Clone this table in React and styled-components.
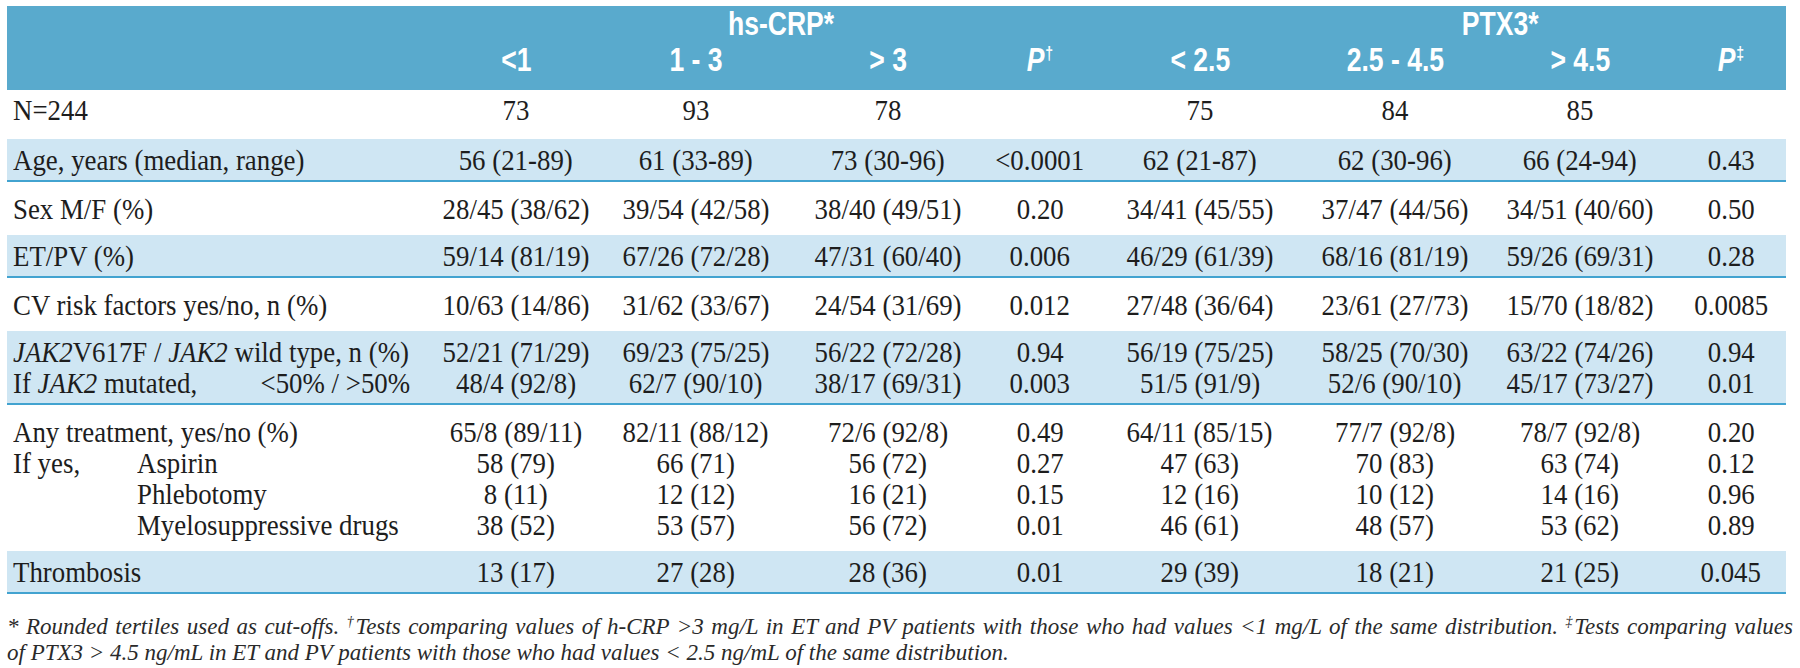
import styled, { createGlobalStyle } from "styled-components";

const GlobalStyle = createGlobalStyle`
  html, body { margin: 0; padding: 0; background: #ffffff; }
  body { width: 1800px; height: 668px; overflow: hidden; }
`;

const Page = styled.div`
  padding: 6px 14px 0 7px;
  color: #1d1d1d;
`;

const Table = styled.table`
  width: 1779px;
  border-collapse: collapse;
  table-layout: fixed;
`;

const Col = styled.col`
  width: ${(p) => p.$w}px;
`;

const Head = styled.thead`
  background: #59aacd;
  color: #ffffff;
  font-family: "Liberation Sans", Arial, sans-serif;
`;

const HeadCell = styled.th`
  padding: ${(p) => p.$padTop || 0}px ${(p) => p.$padRight || 0}px 0 ${(p) => p.$padLeft || 0}px;
  height: ${(p) => p.$h}px;
  font-size: 34px;
  line-height: 34px;
  font-weight: bold;
  text-align: center;
  vertical-align: ${(p) => p.$valign || "middle"};
  white-space: nowrap;
`;

const HeadTxt = styled.span`
  display: inline-block;
  transform: scaleX(0.78);
  transform-origin: center;
`;

const HeadP = styled.span`
  font-style: italic;
`;

const HeadSup = styled.sup`
  font-size: 18px;
  font-style: normal;
  vertical-align: 12px;
  line-height: 0;
  margin-left: 1px;
`;

const Group = styled.tbody`
  background: ${(p) => (p.$band ? "#cfe6f3" : "transparent")};
  border-bottom: ${(p) => (p.$band ? "2px solid #42a3d0" : "none")};
`;

const Cell = styled.td`
  padding: ${(p) => p.$top}px 0 ${(p) => p.$bottom}px ${(p) => (p.$label ? 6 : 0)}px;
  height: 31px;
  line-height: 31px;
  font-family: "Liberation Serif", "Times New Roman", serif;
  font-size: 30px;
  text-align: ${(p) => (p.$label ? "left" : "center")};
  white-space: nowrap;
`;

const Txt = styled.span`
  display: inline-block;
  transform: scaleX(0.895);
  transform-origin: ${(p) => p.$origin || "center"};
`;

const LabelLine = styled.div`
  display: flex;
  align-items: baseline;
  justify-content: ${(p) => (p.$split ? "space-between" : "flex-start")};
  padding-right: ${(p) => (p.$split ? 20 : 0)}px;
`;

const Lead = styled.span`
  width: 124px;
  flex: none;
`;

const Notes = styled.div`
  margin-top: 20px;
  width: 1786px;
  font-family: "Liberation Serif", "Times New Roman", serif;
  font-style: italic;
  font-size: 23px;
  line-height: 26px;
  color: #2a2a2a;
`;

const NoteLine = styled.div`
  white-space: nowrap;
  text-align: ${(p) => (p.$justify ? "justify" : "left")};
  text-align-last: ${(p) => (p.$justify ? "justify" : "auto")};
`;

const NoteSup = styled.sup`
  font-size: 14px;
  line-height: 0;
  vertical-align: 8px;
`;

const widths = [423, 172, 188, 196, 108, 212, 178, 192, 110];

const J = ({ children }) => <i>{children}</i>;

// pad: [top, bottom] around the group
const groups = [
  {
    band: false,
    pad: [4, 14],
    rows: [{ label: "N=244", values: ["73", "93", "78", "", "75", "84", "85", ""] }],
  },
  {
    band: true,
    pad: [5, 5],
    rows: [
      {
        label: "Age, years (median, range)",
        values: ["56 (21-89)", "61 (33-89)", "73 (30-96)", "<0.0001", "62 (21-87)", "62 (30-96)", "66 (24-94)", "0.43"],
      },
    ],
  },
  {
    band: false,
    pad: [11, 11],
    rows: [
      {
        label: "Sex M/F (%)",
        values: ["28/45 (38/62)", "39/54 (42/58)", "38/40 (49/51)", "0.20", "34/41 (45/55)", "37/47 (44/56)", "34/51 (40/60)", "0.50"],
      },
    ],
  },
  {
    band: true,
    pad: [5, 5],
    rows: [
      {
        label: "ET/PV (%)",
        values: ["59/14 (81/19)", "67/26 (72/28)", "47/31 (60/40)", "0.006", "46/29 (61/39)", "68/16 (81/19)", "59/26 (69/31)", "0.28"],
      },
    ],
  },
  {
    band: false,
    pad: [11, 11],
    rows: [
      {
        label: "CV risk factors yes/no, n (%)",
        values: ["10/63 (14/86)", "31/62 (33/67)", "24/54 (31/69)", "0.012", "27/48 (36/64)", "23/61 (27/73)", "15/70 (18/82)", "0.0085"],
      },
    ],
  },
  {
    band: true,
    pad: [5, 5],
    rows: [
      {
        label: (
          <>
            <J>JAK2</J>V617F / <J>JAK2</J> wild type, n (%)
          </>
        ),
        values: ["52/21 (71/29)", "69/23 (75/25)", "56/22 (72/28)", "0.94", "56/19 (75/25)", "58/25 (70/30)", "63/22 (74/26)", "0.94"],
      },
      {
        label: (
          <>
            If <J>JAK2</J> mutated,
          </>
        ),
        right: "<50% / >50%",
        values: ["48/4 (92/8)", "62/7 (90/10)", "38/17 (69/31)", "0.003", "51/5 (91/9)", "52/6 (90/10)", "45/17 (73/27)", "0.01"],
      },
    ],
  },
  {
    band: false,
    pad: [11, 11],
    rows: [
      {
        label: "Any treatment, yes/no (%)",
        values: ["65/8 (89/11)", "82/11 (88/12)", "72/6 (92/8)", "0.49", "64/11 (85/15)", "77/7 (92/8)", "78/7 (92/8)", "0.20"],
      },
      {
        lead: "If yes,",
        label: "Aspirin",
        values: ["58 (79)", "66 (71)", "56 (72)", "0.27", "47 (63)", "70 (83)", "63 (74)", "0.12"],
      },
      {
        lead: "",
        label: "Phlebotomy",
        values: ["8 (11)", "12 (12)", "16 (21)", "0.15", "12 (16)", "10 (12)", "14 (16)", "0.96"],
      },
      {
        lead: "",
        label: "Myelosuppressive drugs",
        values: ["38 (52)", "53 (57)", "56 (72)", "0.01", "46 (61)", "48 (57)", "53 (62)", "0.89"],
      },
    ],
  },
  {
    band: true,
    pad: [5, 5],
    rows: [
      {
        label: "Thrombosis",
        values: ["13 (17)", "27 (28)", "28 (36)", "0.01", "29 (39)", "18 (21)", "21 (25)", "0.045"],
      },
    ],
  },
];

const subHeads = [
  "<1",
  "1 - 3",
  "> 3",
  <>
    <HeadP>P</HeadP>
    <HeadSup>†</HeadSup>
  </>,
  "< 2.5",
  "2.5 - 4.5",
  "> 4.5",
  <>
    <HeadP>P</HeadP>
    <HeadSup>‡</HeadSup>
  </>,
];

const Label = ({ row }) => {
  if (row.lead !== undefined) {
    return (
      <LabelLine>
        <Lead>
          <Txt $origin="left">{row.lead}</Txt>
        </Lead>
        <Txt $origin="left">{row.label}</Txt>
      </LabelLine>
    );
  }
  if (row.right) {
    return (
      <LabelLine $split>
        <Txt $origin="left">{row.label}</Txt>
        <Txt $origin="right">{row.right}</Txt>
      </LabelLine>
    );
  }
  return <Txt $origin="left">{row.label}</Txt>;
};

export default function App() {
  return (
    <Page>
      <GlobalStyle />
      <Table>
        <colgroup>
          {widths.map((w, i) => (
            <Col key={i} $w={w} />
          ))}
        </colgroup>
        <Head>
          <tr>
            <HeadCell $h={34} />
            <HeadCell $h={34} />
            <HeadCell $h={34} colSpan={2} $padRight={26}>
              <HeadTxt>hs-CRP*</HeadTxt>
            </HeadCell>
            <HeadCell $h={34} />
            <HeadCell $h={34} />
            <HeadCell $h={34} colSpan={2} $padLeft={18}>
              <HeadTxt>PTX3*</HeadTxt>
            </HeadCell>
            <HeadCell $h={34} />
          </tr>
          <tr>
            <HeadCell $h={48} $valign="top" $padTop={2} />
            {subHeads.map((h, i) => (
              <HeadCell key={i} $h={48} $valign="top" $padTop={2}>
                <HeadTxt>{h}</HeadTxt>
              </HeadCell>
            ))}
          </tr>
        </Head>
        {groups.map((g, gi) => (
          <Group key={gi} $band={g.band}>
            {g.rows.map((r, ri) => {
              const top = ri === 0 ? g.pad[0] : 0;
              const bottom = ri === g.rows.length - 1 ? g.pad[1] : 0;
              return (
                <tr key={ri}>
                  <Cell $label $top={top} $bottom={bottom}>
                    <Label row={r} />
                  </Cell>
                  {r.values.map((v, vi) => (
                    <Cell key={vi} $top={top} $bottom={bottom}>
                      <Txt>{v}</Txt>
                    </Cell>
                  ))}
                </tr>
              );
            })}
          </Group>
        ))}
      </Table>
      <Notes>
        <NoteLine $justify>
          * Rounded tertiles used as cut-offs. <NoteSup>†</NoteSup>Tests comparing values of h-CRP &gt;3 mg/L in ET
          and PV patients with those who had values &lt;1 mg/L of the same distribution. <NoteSup>‡</NoteSup>Tests
          comparing values
        </NoteLine>
        <NoteLine>
          of PTX3 &gt; 4.5 ng/mL in ET and PV patients with those who had values &lt; 2.5 ng/mL of the same
          distribution.
        </NoteLine>
      </Notes>
    </Page>
  );
}
